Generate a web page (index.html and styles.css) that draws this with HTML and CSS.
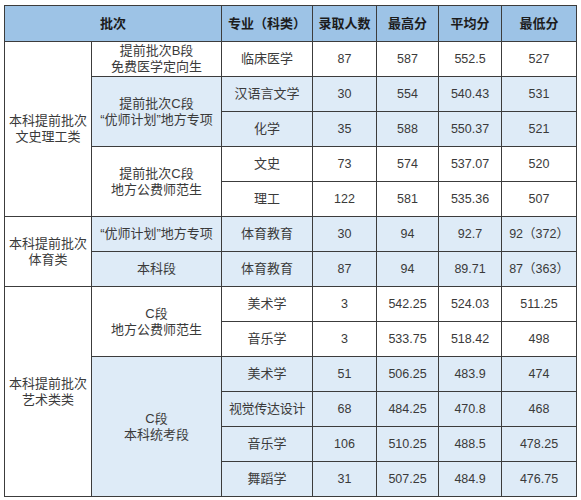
FILE: index.html
```html
<!DOCTYPE html>
<html lang="zh-CN">
<head>
<meta charset="utf-8">
<link rel="stylesheet" href="styles.css">
</head>
<body>
<table class="score">
  <colgroup>
    <col class="c1"><col class="c2"><col class="c3"><col class="c4"><col class="c5"><col class="c6"><col class="c7">
  </colgroup>
  <thead>
    <tr class="head">
      <th colspan="2">批次</th>
      <th>专业（科类）</th>
      <th>录取人数</th>
      <th>最高分</th>
      <th>平均分</th>
      <th>最低分</th>
    </tr>
  </thead>
  <tbody>
    <tr>
      <td rowspan="5" class="cat">本科提前批次<br>文史理工类</td>
      <td class="lvl">提前批次B段<br>免费医学定向生</td>
      <td>临床医学</td><td class="n">87</td><td class="n">587</td><td class="n">552.5</td><td class="n">527</td>
    </tr>
    <tr class="blue">
      <td rowspan="2" class="lvl">提前批次C段<br>“优师计划”地方专项</td>
      <td>汉语言文学</td><td class="n">30</td><td class="n">554</td><td class="n">540.43</td><td class="n">531</td>
    </tr>
    <tr class="blue">
      <td>化学</td><td class="n">35</td><td class="n">588</td><td class="n">550.37</td><td class="n">521</td>
    </tr>
    <tr>
      <td rowspan="2" class="lvl">提前批次C段<br>地方公费师范生</td>
      <td>文史</td><td class="n">73</td><td class="n">574</td><td class="n">537.07</td><td class="n">520</td>
    </tr>
    <tr>
      <td>理工</td><td class="n">122</td><td class="n">581</td><td class="n">535.36</td><td class="n">507</td>
    </tr>
    <tr class="blue">
      <td rowspan="2" class="cat">本科提前批次<br>体育类</td>
      <td class="lvl">“优师计划”地方专项</td>
      <td>体育教育</td><td class="n">30</td><td class="n">94</td><td class="n">92.7</td><td class="n">92（372）</td>
    </tr>
    <tr class="blue">
      <td class="lvl">本科段</td>
      <td>体育教育</td><td class="n">87</td><td class="n">94</td><td class="n">89.71</td><td class="n">87（363）</td>
    </tr>
    <tr>
      <td rowspan="6" class="cat">本科提前批次<br>艺术类类</td>
      <td rowspan="2" class="lvl">C段<br>地方公费师范生</td>
      <td>美术学</td><td class="n">3</td><td class="n">542.25</td><td class="n">524.03</td><td class="n">511.25</td>
    </tr>
    <tr>
      <td>音乐学</td><td class="n">3</td><td class="n">533.75</td><td class="n">518.42</td><td class="n">498</td>
    </tr>
    <tr class="blue">
      <td rowspan="4" class="lvl">C段<br>本科统考段</td>
      <td>美术学</td><td class="n">51</td><td class="n">506.25</td><td class="n">483.9</td><td class="n">474</td>
    </tr>
    <tr class="blue">
      <td class="tight">视觉传达设计</td><td class="n">68</td><td class="n">484.25</td><td class="n">470.8</td><td class="n">468</td>
    </tr>
    <tr class="blue">
      <td>音乐学</td><td class="n">106</td><td class="n">510.25</td><td class="n">488.5</td><td class="n">478.25</td>
    </tr>
    <tr class="blue">
      <td>舞蹈学</td><td class="n">31</td><td class="n">507.25</td><td class="n">484.9</td><td class="n">476.75</td>
    </tr>
  </tbody>
</table>
</body>
</html>
```
FILE: styles.css
```css
html, body {
  margin: 0;
  padding: 0;
  background: #ffffff;
}
body {
  padding: 5px 0 0 4px;
  font-family: "Liberation Sans", "Noto Sans CJK SC", sans-serif;
  color: #3a3a3a;
}
.score {
  border-collapse: collapse;
  table-layout: fixed;
  width: 572px;
}
.c1 { width: 87px; }
.c2 { width: 130px; }
.c3 { width: 91px; }
.c4 { width: 64px; }
.c5 { width: 62px; }
.c6 { width: 63px; }
.c7 { width: 75px; }
.score th,
.score td {
  border: 1px solid #3c3c3c;
  padding: 0;
  text-align: center;
  vertical-align: middle;
  font-size: 13px;
  line-height: 16px;
  white-space: nowrap;
  overflow: hidden;
}
.head th {
  height: 35px;
  background: #9dc3e6;
  color: #1c1c1c;
  font-weight: bold;
}
.score tbody tr {
  height: 35px;
}
.blue td {
  background: #deebf7;
}
.score td.cat {
  background: #ffffff;
}
.score td.n {
  font-size: 12.5px;
}
.score td.tight {
  letter-spacing: -0.3px;
}
```
